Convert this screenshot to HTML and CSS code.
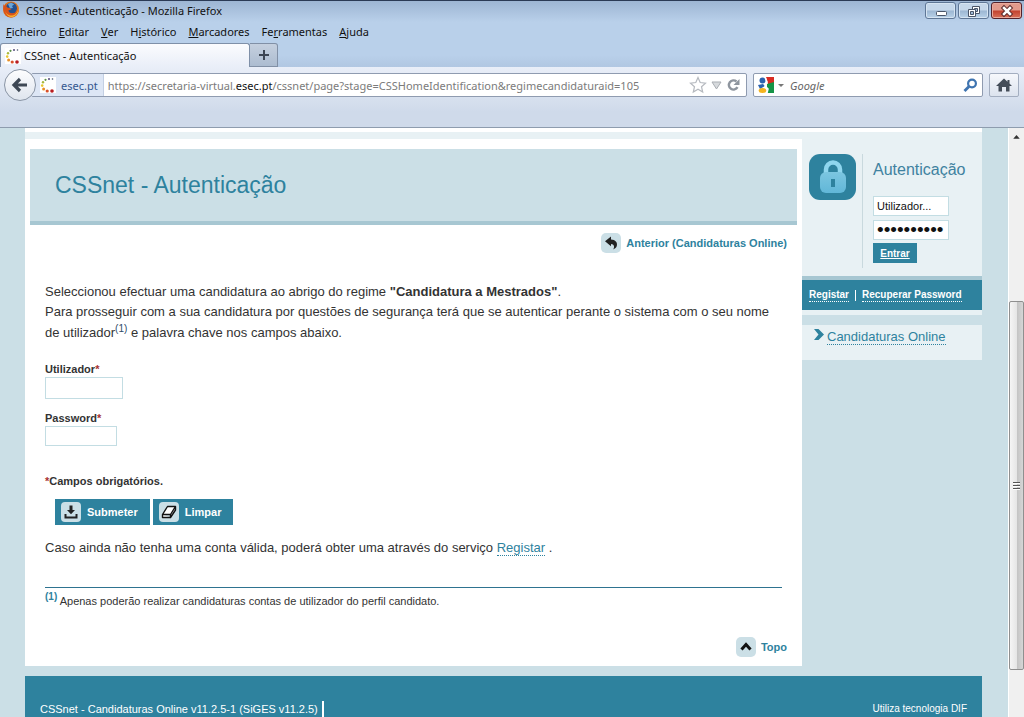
FILE: index.html
```html
<!DOCTYPE html>
<html lang="pt">
<head>
<meta charset="utf-8">
<title>CSSnet - Autenticação</title>
<link rel="stylesheet" href="styles.css">
</head>
<body>
<svg class="defs" aria-hidden="true">
  <symbol id="dots" viewBox="0 0 16 16">
    <rect width="16" height="16" fill="#fff"/>
    <circle cx="12.5" cy="2" r="0.8" fill="#44516e"/><circle cx="9" cy="1.9" r="1" fill="#544a7c"/>
    <circle cx="5.5" cy="2.8" r="1.1" fill="#5a8f4a"/><circle cx="3" cy="5.2" r="1.2" fill="#a8b83a"/>
    <circle cx="2.2" cy="8.6" r="1.3" fill="#e8c730"/><circle cx="3.6" cy="12" r="1.5" fill="#e89028"/>
    <circle cx="7.2" cy="14" r="1.6" fill="#d8502a"/><circle cx="12" cy="14" r="1.8" fill="#b81c20"/>
  </symbol>
</svg>
<div class="window">
  <header class="chrome">
    <div class="titlebar">
      <svg class="fox" viewBox="0 0 18 18" aria-hidden="true">
        <circle cx="9" cy="8.5" r="8" fill="#e2761b"/>
        <circle cx="9.4" cy="7.2" r="5.6" fill="#24508f"/>
        <path d="M6 3c2-1.500 5-1 6 .5l-2 1.500 1 2-3 .5z" fill="#6aa5d8"/>
        <path d="M1.500 3C.5 8 1.500 16 9 16.500c6 0 9-6 7.500-11.500-.3 4-2 7-5.500 7.300-3 .2-4.500-1-4.500-3l3-.8-2-1.500C5 7 3.500 5 4 3L2.500 5z" fill="#d9531a"/>
        <path d="M16 4c1 5-1 9.500-5.500 10.500C6 15 3.500 12 3 9c1 6 5 7.500 7.500 7 4.500-1 7.500-6 5.500-12z" fill="#f6b32e"/>
      </svg>
      <span class="caption">CSSnet - Autenticação - Mozilla Firefox</span>
      <div class="winbuttons">
        <button class="winbtn" aria-label="Minimizar"><svg width="28" height="16" viewBox="0 0 28 16"><rect x="9.500" y="8.500" width="10" height="4" rx="1" fill="#fff" stroke="#4a5568"/></svg></button>
        <button class="winbtn" aria-label="Restaurar"><svg width="28" height="16" viewBox="0 0 28 16"><path d="M12.500 3.500h7v7h-7z" fill="#fff" stroke="#4a5568"/><path d="M14.500 5.500h3v3h-3z" fill="#9db8d4" stroke="#4a5568"/><path d="M8.500 6.500h7v7h-7z" fill="#fff" stroke="#4a5568"/><path d="M10.500 8.500h3v3h-3z" fill="#9db8d4" stroke="#4a5568"/></svg></button>
        <button class="winbtn close" aria-label="Fechar"><svg width="28" height="16" viewBox="0 0 28 16"><path d="M11 5l6 6M17 5l-6 6" stroke="#5b2a2a" stroke-width="4.500" stroke-linecap="square"/><path d="M11 5l6 6M17 5l-6 6" stroke="#fff" stroke-width="2.500" stroke-linecap="square"/></svg></button>
      </div>
    </div>
    <nav class="menubar">
      <span><u>F</u>icheiro</span><span><u>E</u>ditar</span><span><u>V</u>er</span><span>H<u>i</u>stórico</span><span><u>M</u>arcadores</span><span>Fe<u>r</u>ramentas</span><span><u>A</u>juda</span>
    </nav>
    <div class="tabs">
      <div class="tab"><svg class="fav" aria-hidden="true"><use href="#dots"/></svg><span>CSSnet - Autenticação</span></div>
      <button class="newtab" aria-label="Novo separador"><svg width="12" height="12" viewBox="0 0 12 12"><path d="M6 1v10M1 6h10" stroke="#3d4654" stroke-width="2"/></svg></button>
    </div>
    <div class="toolbar">
      <button class="back" aria-label="Retroceder"><svg width="18" height="16" viewBox="0 0 18 16"><path d="M9 2L3 8l6 6M3.500 8H16" fill="none" stroke="#3e4855" stroke-width="3.200"/></svg></button>
      <div class="urlbar">
        <div class="identity"><svg class="fav" aria-hidden="true"><use href="#dots"/></svg><span>esec.pt</span></div>
        <div class="url" role="textbox" aria-label="Endereço">https://secretaria-virtual.<b>esec.pt</b>/cssnet/page?stage=CSSHomeIdentification&amp;regimecandidaturaid=105</div>
        <svg class="urlicons" width="52" height="18" viewBox="0 0 52 18" aria-hidden="true">
          <path d="M9 1.500l2.200 5 5.300.6-4 3.600 1.200 5.300L9 13.300 4.300 16l1.200-5.300-4-3.600 5.300-.6z" fill="#fff" stroke="#b5b9bf" stroke-width="1.200"/>
          <path d="M23 6h9l-4.500 7z" fill="#d7dadd" stroke="#a9adb3"/>
          <path d="M48.500 11.200A4.600 4.600 0 1 1 47.500 5.500" fill="none" stroke="#8e959e" stroke-width="2.400"/><path d="M50.500 3v6h-6z" fill="#8e959e"/>
        </svg>
      </div>
      <div class="searchbar">
        <svg width="28" height="16" viewBox="0 0 28 16" aria-hidden="true">
          <rect width="16" height="16" fill="#fff"/><path d="M8 0h8v7H10z" fill="#d92b22"/><path d="M9 7l7-2v11H9z" fill="#159447"/>
          <circle cx="4.500" cy="3.500" r="3" fill="#2c62ae"/><path d="M0 8l5-1 2 2-5 3z" fill="#2c62ae"/><ellipse cx="4.500" cy="13.500" rx="3.800" ry="2.500" fill="#f4b41f"/><path d="M7 0l2 5-2 4 3 3-1 4" fill="none" stroke="#fff" stroke-width="1.500"/>
          <path d="M20 7h6l-3 3z" fill="#777"/>
        </svg>
        <input type="text" placeholder="Google" aria-label="Pesquisar">
        <svg width="15" height="15" viewBox="0 0 15 15" aria-hidden="true"><circle cx="9" cy="5.500" r="3.900" fill="none" stroke="#3f74b0" stroke-width="2.200"/><path d="M6 8.500L1.500 13" stroke="#3f74b0" stroke-width="2.800"/></svg>
      </div>
      <button class="home" aria-label="Início"><svg width="18" height="16" viewBox="0 0 18 16"><path d="M9 1.500L1 9h2.500v5.500H7V10h4v4.500h3.500V9H17L14.500 6.600V3h-2v1.700z" fill="#444d59"/></svg></button>
    </div>
  </header>

  <div class="viewport">
    <div class="page">
      <div class="topstrip"></div>
      <div class="columns">
        <main class="card">
          <div class="heading"><h1>CSSnet - Autenticação</h1></div>
          <div class="linkrow back-row"><a class="iconlink" href="#"><svg class="chip" viewBox="0 0 20 20"><rect width="20" height="20" rx="5" fill="#cbdfe6"/><path d="M4 8.300L10 3.600v2.900c4.500.2 6.500 3 5.900 6-.4 2-1.900 3.400-3.900 3.900 1.900-2.200 1.300-5.400-2-5.500v2.400z" fill="#222"/></svg>Anterior (Candidaturas Online)</a></div>
          <div class="content">
            <p class="intro">Seleccionou efectuar uma candidatura ao abrigo do regime <b>"Candidatura a Mestrados"</b>.<br>Para prosseguir com a sua candidatura por questões de segurança terá que se autenticar perante o sistema com o seu nome de utilizador<sup>(1)</sup> e palavra chave nos campos abaixo.</p>
            <form>
              <div class="field"><label for="user">Utilizador<i>*</i></label><input id="user" class="user" type="text"></div>
              <div class="field"><label for="pass">Password<i>*</i></label><input id="pass" class="pass" type="password"></div>
              <p class="required"><i>*</i>Campos obrigatórios.</p>
              <div class="buttons">
                <button type="submit" class="action"><svg class="chip" viewBox="0 0 20 20"><rect width="20" height="20" rx="4" fill="#cbdfe6"/><path d="M8.500 3.500h3V8H14l-4 4.200L6 8h2.500zM3.500 12h2v2.500h9V12h2v4.500h-13z" fill="#222"/></svg>Submeter</button>
                <button type="reset" class="action"><svg class="chip" viewBox="0 0 20 20"><rect width="20" height="20" rx="4" fill="#cbdfe6"/><path d="M8.500 4.500h8l-5 8h-8zM16.500 4.500V8l-5 7.500v-3M3.500 12.500v3h8" fill="#fff" stroke="#111" stroke-width="1.400" stroke-linejoin="round"/></svg>Limpar</button>
              </div>
            </form>
            <p class="register">Caso ainda não tenha uma conta válida, poderá obter uma através do serviço <a href="#">Registar</a> .</p>
            <p class="footnote"><sup>(1)</sup> Apenas poderão realizar candidaturas contas de utilizador do perfil candidato.</p>
          </div>
          <div class="linkrow top-row"><a class="iconlink" href="#"><svg class="chip" viewBox="0 0 20 20"><rect width="20" height="20" rx="5" fill="#cbdfe6"/><path d="M5.500 12.500L10 7.500l4.500 5" fill="none" stroke="#111" stroke-width="3"/></svg>Topo</a></div>
        </main>
        <aside class="sidebar">
          <section class="login">
            <svg class="lock" viewBox="0 0 47 46" aria-hidden="true">
              <defs><linearGradient id="lk" x1="0" y1="0" x2="0" y2="1"><stop offset="0" stop-color="#7cc6e0"/><stop offset="1" stop-color="#61b7d8"/></linearGradient></defs>
              <rect width="47" height="46" rx="11" fill="#2e829e"/>
              <path d="M17 20v-4.500a7 7 0 0 1 14 0V20" fill="none" stroke="#8fd6ee" stroke-width="4.500"/>
              <rect x="11" y="18" width="26" height="21" rx="6" fill="url(#lk)"/><path d="M24 25v8" stroke="#2e829e" stroke-width="4"/>
            </svg>
            <form class="loginform">
              <h2>Autenticação</h2>
              <input type="text" value="Utilizador..." aria-label="Utilizador">
              <input type="password" value="palavrapas" aria-label="Password">
              <button type="submit">Entrar</button>
            </form>
          </section>
          <div class="loginlinks"><a href="#">Registar</a><span class="sep"></span><a href="#">Recuperar Password</a></div>
          <nav class="sidenav"><svg width="10" height="11" viewBox="0 0 10 11" aria-hidden="true"><path d="M0 0h4.500L10 5.500 4.500 11H0l4.500-5.500z" fill="#2e829e"/></svg><a href="#">Candidaturas Online</a></nav>
        </aside>
      </div>
      <footer class="footer"><span class="version">CSSnet - Candidaturas Online v11.2.5-1 (SiGES v11.2.5)</span><span class="tech">Utiliza tecnologia DIF</span></footer>
    </div>
    <div class="scrollbar" aria-hidden="true">
      <svg class="uparrow" viewBox="0 0 16 17"><path d="M4.500 11L8 7l3.500 4z" fill="#333"/></svg>
      <div class="before"></div>
      <div class="thumb"><i></i><i></i><i></i></div>
      <div class="after"></div>
    </div>
  </div>
</div>
</body>
</html>
```

FILE: styles.css
```css
* { box-sizing: border-box; }
body { margin: 0; font-family: "Liberation Sans", Arial, sans-serif; font-size: 13px; color: #333; }
h1, h2, p { margin: 0; font-weight: normal; }
button, input { font-family: inherit; margin: 0; }
svg { display: block; flex: none; }
.defs { display: none; }
.window { height: 100vh; display: flex; flex-direction: column; overflow: hidden; }

/* Browser chrome */
.chrome { flex: none; font-family: "Noto Sans", "Open Sans", sans-serif; font-size: 11px; color: #111; background: linear-gradient(#9cb4d2 0, #b9d0ea 22px, #b9d0ea 55px, #b1c7e2 67px); border-bottom: 1px solid #8e9cae; }
.titlebar { display: flex; align-items: flex-start; height: 22px; padding: 0 2px; gap: 6px; border-top: 1px solid #2b3a55; }
.fox { width: 18px; height: 18px; }
.caption { flex: 1; line-height: 20px; }
.winbuttons { display: flex; gap: 2px; padding-top: 1px; }
.winbtn { width: 31px; height: 17px; padding: 0; display: flex; align-items: center; justify-content: center; border: 1px solid #5f7796; border-radius: 3px; background: linear-gradient(#c5d7ea 0 48%, #9cb6d2 52%, #b9d2e8); box-shadow: inset 0 0 0 1px #d6e4f2; }
.winbtn.close { border-color: #54222b; background: linear-gradient(#e29a8c 0 48%, #c2412e 52%, #d8705a); box-shadow: inset 0 0 0 1px #e9aa9c; }
.menubar { display: flex; gap: 12px; padding: 0 6px; height: 21px; line-height: 20px; }
.tabs { display: flex; height: 24px; }
.tab { width: 250px; display: flex; align-items: center; gap: 3px; padding: 0 4px; border: 1px solid #7f90a8; border-bottom: 0; border-radius: 3px 3px 0 0; background: linear-gradient(#fbfcfe, #e9eef8); }
.fav { width: 16px; height: 16px; }
.newtab { width: 28px; padding: 0; display: flex; align-items: center; justify-content: center; border: 1px solid #8190a6; border-left-width: 0; border-radius: 0 3px 0 0; background: linear-gradient(#c5d0df, #acbcd0); }
.toolbar { display: flex; align-items: center; height: 60px; padding: 0 5px 24px 4px; background: linear-gradient(#e9eef8, #cfdaea 45px); }
.back { position: relative; z-index: 1; width: 32px; height: 32px; padding: 0; display: flex; align-items: center; justify-content: center; border: 1px solid #8a95a5; border-radius: 50%; background: linear-gradient(#fdfdfe, #dfe5ee); }
.urlbar { flex: 1; display: flex; align-items: center; height: 24px; margin-left: -5px; margin-right: 6px; padding-right: 5px; border: 1px solid #8f9bb0; border-radius: 2px; background: #fff; }
.identity { display: flex; align-items: center; gap: 5px; height: 22px; padding: 0 5px 0 8px; color: #34578f; background: #dde6f5; border-right: 1px solid #c3cfe3; }
.url { flex: 1; padding-left: 4px; color: #7b7b7b; white-space: nowrap; overflow: hidden; }
.url b { font-weight: normal; color: #111; }
.searchbar { width: 230px; height: 24px; display: flex; align-items: center; gap: 4px; padding: 0 4px; border: 1px solid #8f9bb0; border-radius: 2px; background: #fff; }
.searchbar input { flex: 1; min-width: 0; padding: 0; border: 0; outline: 0; font-size: 11px; font-style: italic; background: none; }
.searchbar input::placeholder { color: #666; }
.home { width: 30px; height: 24px; margin-left: 6px; padding: 0; display: flex; align-items: center; justify-content: center; border: 1px solid #a3aec0; border-radius: 2px; background: linear-gradient(#f6f8fc, #dce3ee); }

/* Page */
.viewport { flex: 1; min-height: 0; display: flex; background: #cbdfe6; }
.page { flex: 1; min-width: 0; display: flex; flex-direction: column; padding: 0 26px 0 25px; overflow: hidden; }
.topstrip { flex: none; height: 11px; background: #e8f1f4; border-top: 4px solid #fff; }
.columns { display: flex; align-items: flex-start; }
.card { flex: 1; min-width: 0; padding: 10px 5px 9px; background: #fff; }
.heading { padding: 20px 25px 20px; background: #cbdfe6; border-bottom: 4px solid #a7c7d2; }
.heading h1 { font-size: 23px; line-height: 32px; color: #2e829e; }
.linkrow { display: flex; justify-content: flex-end; padding-right: 10px; }
.back-row { margin-top: 8px; }
.top-row { margin-top: 28px; }
.iconlink { display: flex; align-items: center; gap: 5px; font-size: 11px; font-weight: bold; color: #2e829e; text-decoration: none; }
.chip { width: 20px; height: 20px; }
.content { padding: 29px 15px 0; }
.intro { line-height: 20px; margin-bottom: 18px; }
sup { font-size: 10px; line-height: 14px; }
.intro sup { color: #2f4a6a; }
i { font-style: normal; }
.field { display: flex; flex-direction: column; align-items: flex-start; margin-bottom: 11px; font-size: 11px; line-height: 16px; font-weight: bold; }
.field i, .required i { color: #a83232; }
.field input { border: 1px solid #c3dde3; background: #fff; }
.field .user { width: 78px; height: 22px; }
.field .pass { width: 72px; height: 20px; }
.required { margin-top: 27px; font-size: 11px; font-weight: bold; line-height: 16px; }
.buttons { display: flex; gap: 3px; padding: 10px 10px 13px; }
.action { display: flex; align-items: center; gap: 6px; height: 26px; padding: 0 12px 0 6px; border: 0; background: #2e829e; color: #fff; font-size: 11px; font-weight: bold; }
.register { line-height: 20px; }
.register a, .sidenav a { color: #2e829e; text-decoration: none; border-bottom: 1px dotted #2e829e; }
.footnote { margin-top: 29px; padding-top: 5px; border-top: 1px solid #2e7390; font-size: 11px; line-height: 16px; }
.footnote sup { font-weight: bold; line-height: 0; color: #2e829e; }

.sidebar { flex: none; width: 180px; }
.login { display: flex; align-items: flex-start; gap: 6px; padding: 15px 7px 8px; background: #e8f1f4; }
.lock { width: 47px; height: 46px; }
.loginform { flex: 1; display: flex; flex-direction: column; align-items: flex-start; height: 114px; padding-left: 10px; border-left: 1px solid #c9d9de; }
.loginform h2 { padding-top: 3px; margin-bottom: 13px; font-size: 16px; line-height: 26px; color: #3f82a0; }
.loginform input { width: 76px; height: 20px; margin-bottom: 4px; padding: 1px 3px; border: 1px solid #c3dde3; background: #fff; font-size: 11px; color: #111; }
.loginform input[type="password"] { margin-bottom: 3px; font-size: 19px; }
.loginform button { width: 44px; height: 20px; padding: 0; border: 0; background: #2e829e; color: #fff; font-size: 10px; font-weight: bold; text-decoration: underline; }
.loginlinks { display: flex; align-items: center; gap: 6px; height: 39px; padding: 0 7px; background: #2e829e; border-top: 4px solid #a7c7d2; border-bottom: 5px solid #e8f1f4; font-size: 10px; font-weight: bold; line-height: 12px; white-space: nowrap; }
.loginlinks a { color: #fff; text-decoration: none; border-bottom: 1px dotted #fff; }
.sep { width: 1px; height: 11px; background: #fff; }
.sidenav { display: flex; align-items: flex-start; gap: 3px; margin-top: 10px; padding: 4px 12px 15px; background: #e8f1f4; line-height: 15px; font-size: 13px; }
.footer { flex: 1; display: flex; justify-content: space-between; align-items: flex-start; margin-top: 10px; padding: 25px 15px 0; background: #2e829e; color: #fff; font-size: 11px; line-height: 16px; }
.version { padding-right: 4px; border-right: 2px solid #fff; }
.tech { font-size: 10px; }

.scrollbar { flex: none; width: 16px; display: flex; flex-direction: column; background: #f0f0f0; border-left: 1px solid #fff; }
.uparrow { width: 15px; height: 17px; }
.before { flex: 157; }
.thumb { flex: 368; display: flex; flex-direction: column; align-items: center; justify-content: center; gap: 1px; border: 1px solid #8f8f8f; border-radius: 2px; background: linear-gradient(90deg, #f5f5f5, #e6e6e6 50%, #c4c4c4 55%, #d6d6d6); }
.thumb i { width: 7px; height: 2px; background: #555; border-bottom: 1px solid #fff; }
.after { flex: 47; }
```
